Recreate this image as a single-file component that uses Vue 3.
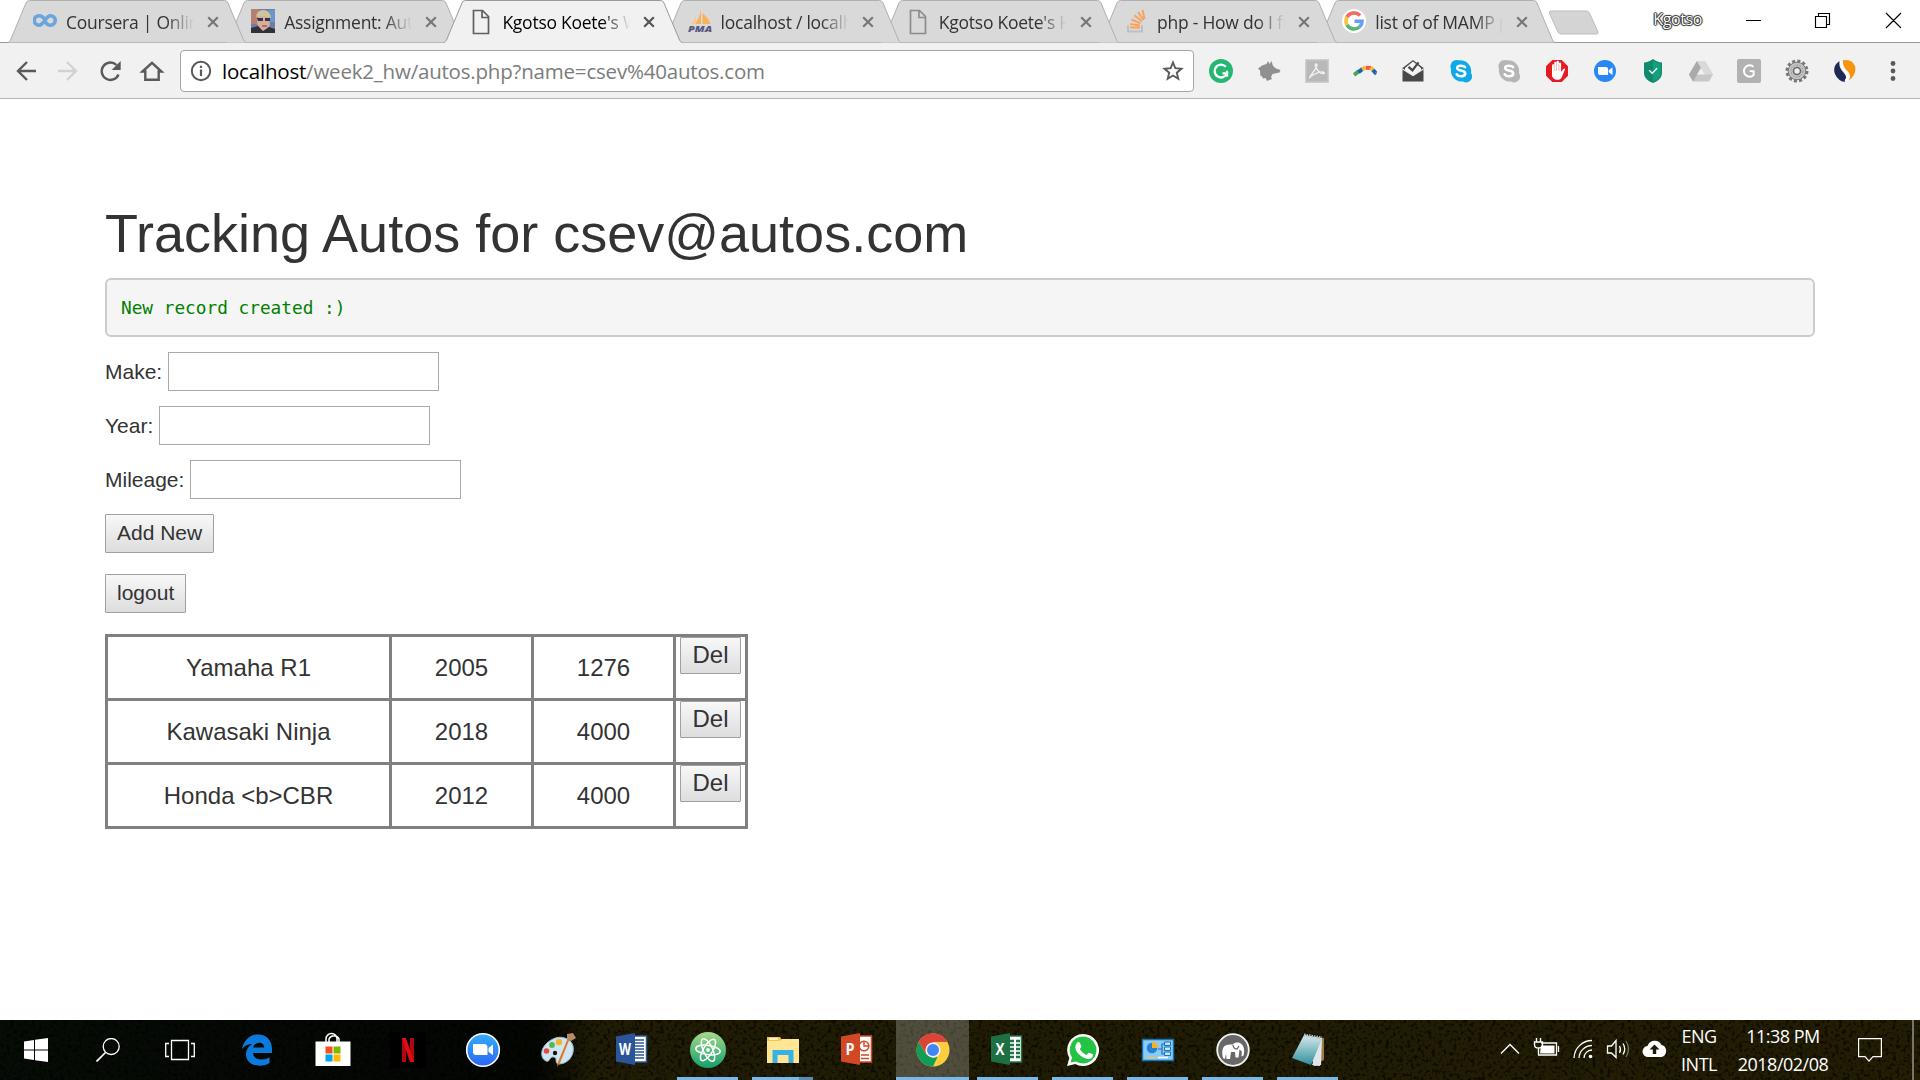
<script setup>
const doc = '<path d="M4.5 1.5h9l6 6v17h-15z M13 2v6.500h6" fill="none" stroke="#5f5f5f" stroke-width="1.700"/>'
const tabs = [
  { title: 'Coursera | Online Courses', icon: '<path d="M12.500 12.500C10.500 8.500 8.500 7.500 6 7.500a4.500 4.500 0 1 0 0 9.500c5.500 0 6.500-9.500 11.500-9.500a4.500 4.500 0 1 1 0 9.500c-2.500 0-4-1.200-5-3.200" fill="none" stroke="#6aa5dc" stroke-width="3.600" transform="translate(0 -.8)"/>' },
  { title: 'Assignment: Autos Database', icon: '<rect y="0" width="24" height="24" fill="#6f7ea6"/><rect width="8" height="15" fill="#b57f74"/><path d="M17 1h7v12h-5z" fill="#6c96c9"/><path d="M7 7h11l1 9-4 6h-4l-5-7z" fill="#d9ac9c"/><path d="M5 8Q6 1 12 1q7 0 8 8l-7-2z" fill="#cfc49b"/><path d="M6 9h6v3H7zm8 0h5v3h-5z" fill="#303646"/><path d="M0 24v-5l7-2 5 5 6-4 6 2v4z" fill="#30323a"/><path d="M11 17h5" stroke="#8b4a4a" stroke-width="1.200"/>' },
  { title: "Kgotso Koete's Web Page", icon: doc, active: true },
  { title: 'localhost / localhost', icon: '<path d="M13 0v15h-6Q12 8 13 0zM14.500 4q6 5 8 11h-8z" fill="#f8b25c"/><path d="M8 5v10H3q4-4 5-10z" fill="#fbc98a"/><text x="0" y="22.800" font-family="Open Sans, sans-serif" font-size="8.500" font-weight="800" font-style="italic" textLength="24" lengthAdjust="spacingAndGlyphs" fill="#55577f">PMA</text>' },
  { title: "Kgotso Koete's Home", icon: doc.replace('#5f5f5f', '#8c8c8c') },
  { title: 'php - How do I fix', icon: '<path d="M4 16v6.500h14V16" fill="none" stroke="#bcbfc4" stroke-width="2"/><path d="M6 18.500h10M6.200 15l9.600 1.500M7.500 10.500l9 3.800M10.300 6.300l7.700 6M14 3l5.500 8M18.500 1l2 9" stroke="#f8a15a" stroke-width="1.900" fill="none"/>' },
  { title: 'list of of MAMP ports', icon: '<circle cx="12" cy="12" r="12" fill="#fff"/><g fill="none" stroke-width="3.600"><path d="M18 6.600A8 8 0 0 0 5 8.200" stroke="#f36b5e"/><path d="M5 8.200a8 8 0 0 0 0 7.600" stroke="#fbc33c"/><path d="M5 15.800A8 8 0 0 0 17.300 18" stroke="#57b66e"/><path d="M17.300 18A8 8 0 0 0 20 12.200h-7.500" stroke="#6a9df8"/></g>' },
]

const skype = (c) => `<path d="M5 1.500a6 6 0 0 1 4.500-.2A11 11 0 0 1 22 14a6 6 0 0 1-8 8.500A11 11 0 0 1 2 10 6.500 6.500 0 0 1 5 1.500z" fill="${c}"/><path d="M16 8.200C15 6.500 8.200 5.600 8.200 9c0 3.400 8 1.800 8 5.400 0 3.800-7 3.500-8.500 1" fill="none" stroke="#fff" stroke-width="2.600" stroke-linecap="round"/>`
const extensions = [
  '<circle cx="12" cy="12" r="12" fill="#25b772"/><path d="M16.800 7.800a6.400 6.400 0 1 0 1.200 6.600h-4.500M18 11.800v6" fill="none" stroke="#fff" stroke-width="2.300"/>',
  '<path d="M1 9.500l4-3L9.500 5l1.500-3 1.500 3 2-3 1.500 5 3 2.500 4.500 1.500-1 2.500-7 1.500-1.500 3 1 2-5 2-1.500-3-2.500.5-1.500-3-1 1-.5-6z" fill="#909090"/>',
  '<rect x=".7" y=".7" width="22.600" height="22.600" fill="#b9b9b9" stroke="#cfcfcf" stroke-width="1.400"/><path d="M5 18.500c1-4 6.500-8 7-12.500.1-1.500-2-1.500-1.700.5.600 4 4.700 8 8 8.200 1.700-.2 1.200-2-1-1.900-4 .2-7.300 1.700-11.500 4.500-1.500 1.200-1.500 2-.8 1.200z" fill="none" stroke="#f4f4f4" stroke-width="1.300"/>',
  '<g fill="none" stroke-width="4"><path d="M1 16l5-4" stroke="#45a45a"/><path d="M5.500 13.200l4-3.300" stroke="#1565ad"/><path d="M9 10.200l4-2" stroke="#f8b83d"/><path d="M13 8.800l5 .3" stroke="#ec5b4b"/><path d="M17.500 8.500l3 3" stroke="#f8b83d"/><path d="M20 11l3.500 4" stroke="#1565ad"/></g><path d="M0 18v-3l1.500-1.500zM24 17v-4l-2 0z" fill="#f1f1f1" opacity=".3"/>',
  '<path d="M1.500 9L12 1l10.500 8v13.500h-21z" fill="#484848"/><path d="M4 9l8-6.500L20 9v2.500l-8 5-8-5z" fill="#f4f4f4"/><path d="M7.500 7.800l4 3.500 6-8" fill="none" stroke="#484848" stroke-width="2.200"/><path d="M1.500 10L12 16.500 22.500 10" fill="none" stroke="#eee" stroke-width="1.200"/>',
  skype('#10a8e6'), skype('#b5b5b5'),
  '<path d="M7.300 1h9.400L23 7.300v9.400L16.700 23H7.300L1 16.700V7.300z" fill="#e51b23"/><path d="M7 13V6.300a1.100 1.100 0 0 1 2.200 0V4a1.100 1.100 0 0 1 2.300 0V3a1.200 1.200 0 0 1 2.400 0v1.500a1.100 1.100 0 0 1 2.200 0V13l2-2.800q1.600-1.400 2 0l-3.300 8q-1.200 2.600-4.800 2.600T7 17z" fill="#fff"/><path d="M9.200 6v6M11.500 4v8M13.900 4.500V12" stroke="#e8888a" stroke-width=".6"/>',
  '<circle cx="12" cy="12" r="11" fill="#2787f5"/><path d="M5 8h8.200q1.800 0 1.800 1.800V16H7q-2 0-2-2zM15.700 11.200L19.500 8.300v7.600l-3.800-2.700z" fill="#fff"/>',
  '<path d="M12 0c3 2.500 6 3.300 9 3.500V14c0 5-4.500 8.500-9 10-4.500-1.500-9-5-9-10V3.500C6 3.300 9 2.500 12 0z" fill="#0f8a6c"/><path d="M12 1.500c2.500 2 5 2.800 7.800 3.200V14c0 4-3.800 7-7.800 8.500z" fill="#159f7e"/><path d="M8.200 11.200l3 3 4.800-5" fill="none" stroke="#fff" stroke-width="1.500"/>',
  '<path d="M8 2h8l8 13.500-4 7H4l-4-7z" fill="#c7c7c7"/><path d="M8 2l4 7-8 13.500-4-7z" fill="#aaa"/><path d="M8 2h8l8 13.500h-8z" fill="#dadada"/><path d="M12 9l4 6.500H8z" fill="#f1f1f1"/>',
  '<rect width="24" height="24" rx="2" fill="#b2b2b2"/><path d="M16.500 7.800a5.700 5.700 0 1 0 .1 8.300v-4h-4" fill="none" stroke="#fff" stroke-width="1.900"/>',
  '<circle cx="12" cy="12" r="9.800" fill="none" stroke="#777" stroke-width="3.400" stroke-dasharray="3 2.130"/><circle cx="12" cy="12" r="8.800" fill="#c4c4c4" stroke="#777" stroke-width="1"/><circle cx="12" cy="12" r="6" fill="none" stroke="#999" stroke-width="1" stroke-dasharray="2 1"/><circle cx="12" cy="12" r="3.500" fill="#eee" stroke="#666" stroke-width="1.600"/>',
  '<path d="M6.500 2Q-1 7 2 15q3 7 10 8-1-1 1-4c1-5-8-7-6.500-17z" fill="#1d2a57"/><path d="M10 1.200Q19-.5 22 7q2 8-6 14.500 3-6-2-10-4.500-4-4-10.300z" fill="#f7940f"/><path d="M8.500 2q-1 7 4 10.500 4 3.500 1 9" fill="none" stroke="#fff" stroke-width="2.200"/>',
]

const office = (c, d, sheet) => `<path d="M17 4h14.500v26H17z" fill="#fff" stroke="${c}" stroke-width="1.500"/>${sheet}<path d="M1 4.500L20 1v32L1 29.500z" fill="${d}"/>`
const label = (t) => `<text x="10" y="23" text-anchor="middle" font-family="Open Sans, sans-serif" font-size="16" font-weight="700" textLength="${t === 'W' ? 12 : 9}" lengthAdjust="spacingAndGlyphs" fill="#fff">${t}</text>`
const zoomCam = '<circle cx="18" cy="18" r="16.300" fill="url(#zoomg)" stroke="#fff" stroke-width="1.600"/><path d="M8 12h11q3.500 0 3.500 3.500V23H11q-3 0-3-3zM23.500 16l4.500-3.500v10.800l-4.500-3.500z" fill="#fff"/>'
const apps = [
  { icon: '<path d="M2 17C4 8 10 2.500 18 2.500c8.500 0 14 6 14 14.500v4H13c.3 4.500 4 6.500 8.300 6.500 3.200 0 6-.8 8.200-2.200V31c-2.800 1.800-6.200 2.700-10 2.700C11 33.700 6 28.500 6 22.500c0-4.500 2.500-8.500 6.500-10.500Q6 12 2 17zm11.200-1.500h11c0-6.500-9.700-6.500-11 0z" fill="#0a7bdc"/>' },
  { icon: '<path d="M11 10V7a5.500 5.500 0 0 1 11 0v3M14 10V7a5.500 5.500 0 0 1 10 0v3" fill="none" stroke="#fff" stroke-width="1.500"/><path d="M.5 9.500h35V34h-35z" fill="#fff"/><path d="M10.500 14.500h7v7h-7z" fill="#f25022"/><path d="M18.500 14.500h7v7h-7z" fill="#7fba00"/><path d="M10.500 22.500h7v7h-7z" fill="#00a4ef"/><path d="M18.500 22.500h7v7h-7z" fill="#ffb900"/>' },
  { icon: '<path d="M0 0h36v36H0z" fill="#000"/><path d="M12 6h4v24h-4zM20 6h4v24h-4z" fill="#b20710"/><path d="M12 6h4l8 24h-4z" fill="#e50914"/>' },
  { icon: zoomCam },
  { icon: '<path d="M13 7C20 3 31 6 33 14c2 9-5 18-14 18-5 0-1-6-5-7-5-1-4 6-8 4C-1 26 0 13 13 7z" fill="#cfe5f3" stroke="#8db7d2" stroke-width="1"/><circle cx="15" cy="21" r="2.200" fill="#17150a"/><circle cx="6.500" cy="19" r="2.800" fill="#e24b43"/><circle cx="12" cy="13" r="2.900" fill="#58b947"/><circle cx="19" cy="10" r="3.200" fill="#f2b629"/><path d="M30 6L20 31l-3 4 1-5L28 6z" fill="#de7821"/><path d="M27 2l6-1 3 5-5 3-4-2z" fill="#b98a63"/>' },
  { icon: office('#2b5797', '#2a5699', '<path d="M20 8h9M20 11h9M20 14h9M20 17h9M20 20h9M20 23h9M20 26h9" stroke="#2a5699" stroke-width="1.400"/>') + label('W') },
  { open: true, icon: '<circle cx="18" cy="18" r="18" fill="url(#atomg)"/><g fill="none" stroke="#fff" stroke-width="1.500"><ellipse cx="18" cy="18" rx="12.300" ry="4.600" transform="rotate(8 18 18)"/><ellipse cx="18" cy="18" rx="12.300" ry="4.600" transform="rotate(65 18 18)"/><ellipse cx="18" cy="18" rx="12.300" ry="4.600" transform="rotate(122 18 18)"/></g><circle cx="18" cy="18" r="1.900" fill="#fff"/>' },
  { open: true, multi: true, icon: '<path d="M2 5h13l2 3h17v23H2z" fill="#f6c744"/><path d="M2 9h13l2-2h17v24H2z" fill="#ffe694"/><path d="M4 7h9" stroke="#fff" stroke-width="1.500"/><path d="M7.500 31V18h21v13h-5v-8h-11v8z" fill="#38b1e4"/>' },
  { icon: office('#d24726', '#d24726', '<path d="M21 23h8M21 26.500h8" stroke="#d24726" stroke-width="1.500"/><circle cx="24" cy="14" r="4.800" fill="none" stroke="#d24726" stroke-width="1.600"/><path d="M24 9v5h5" fill="none" stroke="#d24726" stroke-width="1.400"/>') + label('P') },
  { open: true, current: true, icon: '<circle cx="18" cy="18" r="16.500" fill="#ffcd40"/><path d="M18 18L3.700 9.700A16.500 16.500 0 0 1 32.300 9.750H18z" fill="#db4437"/><path d="M18 34.500A16.500 16.500 0 0 1 3.700 9.750L10.900 22 18 26l4.500-1z" fill="#0f9d58"/><path d="M3.700 9.750L11 22l7-12.250 14.300 0A16.500 16.500 0 0 0 3.700 9.750z" fill="#db4437"/><circle cx="18" cy="18" r="7.600" fill="#f1f1f1"/><circle cx="18" cy="18" r="6" fill="#4285f4"/>' },
  { open: true, icon: office('#217346', '#1e6f42', '<path d="M20 9h4M20 13h4M20 17h4M20 21h4M20 25h4M26 9h4M26 13h4M26 17h4M26 21h4M26 25h4" stroke="#217346" stroke-width="2.400"/>') + label('X') },
  { open: true, icon: '<path d="M18 2a16 16 0 1 1-7.700 30L2 34l2.300-8A16 16 0 0 1 18 2z" fill="#fff"/><path d="M18 4.600a13.400 13.400 0 1 1-7 24.800L5.600 30.600 7 25.400A13.400 13.400 0 0 1 18 4.600z" fill="#25c344"/><path d="M11.500 11.500q2-2.500 3.500-.5l1.400 3.500q0 1-1.600 2.500 2.500 4.500 6.800 6l2-2.300q1-.4 4.400 1.800.3 3-3 4.200c-4 1.500-14-4-14.700-11.500q0-2 1.200-3.700z" fill="#fff"/>' },
  { open: true, icon: '<path d="M2.500 7.500h31v21h-31z" fill="#88cbf6" stroke="#1a6fae" stroke-width="1.400"/><circle cx="12" cy="16" r="5.300" fill="#2482cf"/><path d="M12 16V9.500a6 6 0 0 1 6 6.500z" fill="#f6b12b"/><path d="M18 17h4V12h3M22 17v5h3" fill="none" stroke="#1f72b5" stroke-width="1.200"/><path d="M24.500 10h6v3.500h-6zM24.500 15h6v3.500h-6zM24.500 20h6v3.500h-6z" fill="#bce5ff" stroke="#1f72b5" stroke-width="1"/><path d="M7 25.500h10" stroke="#e7c65c" stroke-width="1.500"/><path d="M18 25.500h10" stroke="#fff" stroke-width="1.500"/>' },
  { open: true, icon: '<circle cx="18" cy="18" r="15.800" fill="#686868" stroke="#f3f3f3" stroke-width="1.800"/><path d="M8 26c-1.500-6-1-12 4-13 3-1 4-.5 6-.5 1-2 5-2.500 7-1.500 4 2 5 7 3.500 12.500l-2 1 .3-5-2.300-2-1 8h-3l-.5-5.500h-4L15 27h-3.500l-.5-5.500L10 27z" fill="#fff"/><path d="M18 13q.5 4 4 4l2-3" fill="none" stroke="#686868" stroke-width="1.300"/>' },
  { open: true, icon: '<path d="M30 6l4 0v22l-4 2z" fill="#9d7b48"/><path d="M14 3l18 3-1 27-7 1z" fill="#e7ecee"/><path d="M14 3l18 4-11 26L2 26z" fill="url(#noteg)"/><path d="M31 10l-9 23 8 1z" fill="#dfe6e9"/><path d="M14 3l18 3" stroke="#b7c3c6" stroke-width="3" stroke-dasharray="1.500 1"/>' },
]
const fields = ['Make:', 'Year:', 'Mileage:']
const autos = [
  ['Yamaha R1', '2005', '1276'],
  ['Kawasaki Ninja', '2018', '4000'],
  ['Honda <b>CBR', '2012', '4000'],
]
</script>

<template>
  <div class="screen">
    <header class="strip">
      <div class="tabs">
        <div v-for="(t, i) in tabs" :key="i" class="tab" :class="{ active: t.active }" :style="{ zIndex: t.active ? 20 : 10 - i }">
          <svg class="shape" viewBox="0 0 238 43" width="238" height="43">
            <path d="M0 42.500Q1.500 42 2.500 40L18 3Q19 .5 21.500 .5H216.500Q219 .5 220 3L235.500 40Q236.500 42 238 42.500" :fill="t.active ? '#f1f1f1' : '#d9d9d9'" :stroke="t.active ? '#999' : '#b0b0b0'" />
            <path v-if="t.active" d="M1 42.500H237" stroke="#f1f1f1" stroke-width="1.500" />
          </svg>
          <svg class="favicon" viewBox="0 0 24 26" width="24" height="26" v-html="t.icon"></svg>
          <span class="title">{{ t.title }}</span>
          <svg class="close" viewBox="0 0 12 12" width="12" height="12"><path d="M1.200 1.200l9.600 9.600M10.800 1.200L1.200 10.800" /></svg>
        </div>
      </div>
      <svg class="newtab" viewBox="0 0 52 26" width="52" height="26"><path d="M3 1h35.500q2 0 3 2l8.500 19q.5 2-1.500 2H13q-2 0-3-2L1.300 3Q1 1 3 1z" fill="#d4d4d4" stroke="#bdbdbd" /></svg>
      <div class="window">
        <span class="user">Kgotso</span>
        <svg viewBox="0 0 160 20" width="160" height="20"><path d="M1 10.500h15M70.500 6.500h11v11h-11zM73.500 6V3.500h11v11H82M141 3l15 15M156 3l-15 15" fill="none" stroke="#000" stroke-width="1.150" /></svg>
      </div>
    </header>

    <nav class="toolbar">
      <svg class="nav-icons" viewBox="0 0 150 24" width="150" height="24" fill="none" stroke="#5a5a5a" stroke-width="2.400">
        <path d="M20 12H3M11 3l-9 9 9 9" />
        <path d="M42 12h17M51 3l9 9-9 9" stroke="#d2d2d2" />
        <path d="M102.500 15.500a8.700 8.700 0 1 1-2-9.500" />
        <path d="M104.700 2v9h-9z" fill="#5a5a5a" stroke="none" />
        <path d="M126.500 12.500L136 3.800l9.500 8.700h-2.800v8.300h-13.400v-8.300z" />
      </svg>
      <div class="omnibox">
        <svg viewBox="0 0 22 22" width="22" height="22"><circle cx="11" cy="11" r="9.200" fill="none" stroke="#5a5a5a" stroke-width="2" /><path d="M11 9.500v6.500M11 5.800v2.200" stroke="#5a5a5a" stroke-width="2.200" /></svg>
        <span class="url"><b>localhost</b>/week2_hw/autos.php?name=csev%40autos.com</span>
        <svg class="star" viewBox="0 0 24 24" width="24" height="24"><path d="M12 3.500l2.300 5.700 6.200.5-4.700 4 1.500 6.100-5.300-3.300-5.300 3.300 1.500-6.100-4.700-4 6.200-.5z" fill="none" stroke="#5a5a5a" stroke-width="1.900" /></svg>
      </div>
      <div class="extensions">
        <svg v-for="(e, i) in extensions" :key="i" viewBox="0 0 24 24" width="24" height="24" v-html="e"></svg>
        <svg viewBox="0 0 24 24" width="24" height="24" fill="#5a5a5a"><circle cx="12" cy="4.500" r="2.400" /><circle cx="12" cy="12" r="2.400" /><circle cx="12" cy="19.500" r="2.400" /></svg>
      </div>
    </nav>

    <main class="page">
      <h1>Tracking Autos for csev@autos.com</h1>
      <pre>New record created :)</pre>
      <form @submit.prevent>
        <p v-for="f in fields" :key="f"><label>{{ f }} <input type="text" /></label></p>
        <button>Add New</button>
        <button class="logout">logout</button>
      </form>
      <table>
        <tbody>
          <tr v-for="a in autos" :key="a[0]">
            <td v-for="(c, i) in a" :key="i">{{ c }}</td>
            <td class="action"><button>Del</button></td>
          </tr>
        </tbody>
      </table>
    </main>

    <footer class="taskbar">
      <svg class="texture" viewBox="0 0 1920 60" width="1920" height="60">
        <defs>
          <linearGradient id="soil" x1="0" x2="1"><stop offset="0" stop-color="#070c06" /><stop offset=".2" stop-color="#040703" /><stop offset=".28" stop-color="#040602" /><stop offset=".31" stop-color="#201c05" /><stop offset="1" stop-color="#221d03" /></linearGradient>
          <filter id="grain" x="0" y="0" width="100%" height="100%"><feTurbulence type="fractalNoise" baseFrequency=".28" numOctaves="3" seed="4" /><feColorMatrix values="0 0 0 0 0  0 0 0 0 0  0 0 0 0 0  5 0 0 0 -2.500" /></filter>
          <linearGradient id="zoomg" x2="0" y2="1"><stop stop-color="#35aef8" /><stop offset="1" stop-color="#2a66f5" /></linearGradient>
          <linearGradient id="atomg" x2="0" y2="1"><stop stop-color="#a5d98a" /><stop offset="1" stop-color="#12a06c" /></linearGradient>
          <linearGradient id="noteg" x2="0" y2="1"><stop stop-color="#d7eaec" /><stop offset="1" stop-color="#2f8f9d" /></linearGradient>
        </defs>
        <rect width="1920" height="60" fill="url(#soil)" />
        <rect width="1920" height="60" filter="url(#grain)" opacity=".55" />
      </svg>
      <div class="system">
        <svg viewBox="0 0 24 24" width="24" height="24" fill="#fff"><path d="M0 3.400l10-1.400v9.400H0zM11 1.800L24 0v11.400H11zM0 12.400h10V22L0 20.600zM11 12.400h13V24l-13-1.800z" /></svg>
        <svg viewBox="0 0 24 24" width="24" height="24" fill="none" stroke="#fff" stroke-width="1.300"><circle cx="15.200" cy="8.500" r="8" /><path d="M9.500 14.500L.5 23.500" stroke-width="1.700" /></svg>
        <svg viewBox="0 0 30 24" width="30" height="24" fill="none" stroke="#fff" stroke-width="1.300"><path d="M6.500 2.500h17v19h-17zM4 5.500H.7v13H4M26 5.500h3.300v13H26" /></svg>
      </div>
      <div class="apps">
        <div v-for="(a, i) in apps" :key="i" class="app" :class="{ open: a.open, current: a.current, multi: a.multi }">
          <svg viewBox="0 0 36 36" width="36" height="36" v-html="a.icon"></svg>
        </div>
      </div>
      <div class="tray">
        <svg viewBox="0 0 168 28" width="168" height="28" fill="none" stroke="#fff" stroke-width="1.300">
          <path d="M1 17.500l9-9 9 9" />
          <path d="M41 7h15.500v12H38M58.500 10v6" /><path d="M41 9.500h13.500v8H40z" fill="#fff" stroke="none" /><path d="M36.500 2v4M40.500 2v4M34.500 6h8v3q0 3-4 3t-4-3zM38.500 12v7" stroke-width="1.400" />
          <path d="M74 22A18 18 0 0 1 92 4.500M79 22A13 13 0 0 1 92 9.500M84 22a8 8 0 0 1 8-8" /><circle cx="90.500" cy="20.500" r="1.800" fill="#fff" stroke="none" />
          <path d="M107.500 10h4l4.500-5.500v17L111.500 17h-4zM119.500 10q2 3.500 0 7M123 7.500q3.500 5.500 0 11" /><path d="M126 5q5 8 0 16" stroke="#77775c" />
          <path d="M148.500 21a5.500 5.500 0 0 1-1-11 7.500 7.500 0 0 1 14-1 6.200 6.200 0 0 1 0 12z" fill="#fff" stroke="none" /><path d="M154.500 8.500l5 5h-3.300v4.500h-3.400v-4.500h-3.300z" fill="#201c05" stroke="none" />
        </svg>
        <div class="lang"><span>ENG</span><span>INTL</span></div>
        <div class="clock"><span>11:38 PM</span><span>2018/02/08</span></div>
        <svg class="notice" viewBox="0 0 24 26" width="24" height="26" fill="none" stroke="#fff" stroke-width="1.200"><path d="M.6 1.600h22.800v18H15l-4 4.500-4-4.500H.6z" /></svg>
        <i class="peek"></i>
      </div>
    </footer>
  </div>
</template>

<style>
body { margin: 0; overflow: hidden; }
</style>

<style scoped>
* { box-sizing: border-box; }
.screen { width: 1920px; height: 1080px; display: flex; flex-direction: column; background: #fff; color: #333; font-family: "Liberation Sans", Arial, sans-serif; overflow: hidden; }
svg { display: block; flex: none; }
.strip { height: 43px; flex: none; display: flex; border-bottom: 1px solid #999; font-family: "Open Sans", "Noto Sans", sans-serif; }
.tabs { display: flex; padding-left: 8px; isolation: isolate; }
.tab { position: relative; width: 238px; height: 43px; margin-right: -19.800px; display: flex; align-items: center; padding: 0 27px 0 25px; flex: none; }
.shape { position: absolute; left: 0; top: 0; }
.favicon, .close, .title { position: relative; }
.favicon { margin-top: 1px; }
.title { width: 128px; margin-left: 9px; font-size: 17.500px; letter-spacing: -.25px; white-space: nowrap; overflow: hidden; color: #333; -webkit-mask-image: linear-gradient(90deg, #000 78%, transparent); mask-image: linear-gradient(90deg, #000 78%, transparent); }
.active .title { color: #000; }
.close { margin-left: 13px; fill: none; stroke: #777; stroke-width: 2.200; }
.active .close { stroke: #555; }
.newtab { margin: 10px 0 0 13px; }
.window { margin-left: auto; display: flex; padding: 0 15px 0 0; }
.user { margin: 7px 43px 0 0; font-size: 16px; line-height: 24px; letter-spacing: -.4px; color: #fff; text-shadow: 0 0 1px #000, 1px 0 1px #333, -1px 0 1px #333, 0 1px 1px #333, 0 -1px 1px #333; }
.window svg { margin-top: 10px; }
.toolbar { height: 56px; flex: none; display: flex; align-items: center; background: #f1f1f1; border-bottom: 1px solid #b4b4b4; padding: 0 15px 0 16px; }
.nav-icons { margin-right: 14px; }
.omnibox { width: 1014px; height: 42px; border: 1px solid #a6a6a6; border-radius: 4px; background: #fff; display: flex; align-items: center; padding: 0 8px 0 9px; font-family: "Open Sans", "Noto Sans", sans-serif; }
.url { margin-left: 10px; font-size: 20.500px; color: #7c7c7c; white-space: nowrap; letter-spacing: -.2px; }
.url b { color: #000; font-weight: 400; }
.star { margin-left: auto; }
.extensions { display: flex; gap: 24px; margin-left: 15px; }
.page { flex: 1; padding: 0 105px; }
h1 { margin: 105px 0 15px; font-size: 54px; line-height: 59px; font-weight: 400; }
pre { margin: 0 0 15px; height: 59px; border: 2px solid #ccc; border-radius: 6px; background: #f5f5f5; color: green; padding: 14px; font: 17.750px/28px "DejaVu Sans Mono", monospace; }
form { display: flex; flex-direction: column; align-items: flex-start; }
p { margin: 0 0 15px; height: 39px; font-size: 21px; line-height: 39px; }
label { display: flex; gap: 6px; }
input { width: 271px; height: 39px; border: 1px solid #a9a9a9; padding: 0; background: #fff; }
button { font: 21px "Liberation Sans", Arial, sans-serif; height: 39px; padding: 0 11px 2px; color: #333; border: 1px solid #a0a0a0; border-radius: 1px; background: linear-gradient(#f8f8f8, #ddd); }
.logout { margin-top: 21px; }
table { margin-top: 21px; border-collapse: collapse; table-layout: fixed; width: 643px; font-size: 24px; }
td { width: 142px; height: 64px; border: 3px solid gray; text-align: center; padding: 0; }
td:first-child { width: 284px; }
.action { width: 72px; vertical-align: top; }
.action button { display: block; margin: 0 auto; width: 61px; height: 37px; font-size: 24px; padding: 0 0 1px; }
.taskbar { position: relative; height: 60px; flex: none; display: flex; color: #fff; }
.texture { position: absolute; left: 0; top: 0; }
.system, .apps, .tray { position: relative; display: flex; align-items: center; }
.system { gap: 46px; padding-left: 24px; width: 220px; }
.system svg:nth-child(2) { margin-left: 2px; }
.system svg:nth-child(3) { margin-left: -1px; }
.apps { align-items: stretch; }
.app { position: relative; width: 75px; display: flex; align-items: center; justify-content: center; }
.app.open::after { content: ""; position: absolute; left: 7px; bottom: 0; width: 61px; height: 3px; background: #76b9ed; }
.app.multi::after { background: linear-gradient(90deg, #76b9ed 47px, #568cb5 47px); }
.app.current::before { content: ""; position: absolute; inset: 0 1px; background: #ffffff38; }
.app.current::after { left: 1px; width: 73px; }
.app svg { position: relative; }
.tray { margin-left: auto; font: 18px/28px "Open Sans", "Noto Sans", sans-serif; }
.lang, .clock { display: flex; flex-direction: column; align-items: center; white-space: nowrap; }
.lang { width: 48px; margin-left: 7px; letter-spacing: -.5px; }
.clock { width: 120px; letter-spacing: -.5px; }
.notice { margin-left: 15px; }
.peek { width: 2px; height: 60px; margin: 0 6px 0 30px; background: #77756a; }
</style>
